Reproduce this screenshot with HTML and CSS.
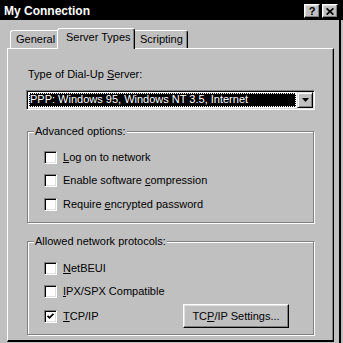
FILE: index.html
```html
<!DOCTYPE html>
<html>
<head>
<meta charset="utf-8">
<link rel="stylesheet" href="styles.css">
</head>
<body>
<div class="window">
  <div class="titlebar">
    <span class="title">My Connection</span>
    <div class="tb-buttons">
      <span class="tb-btn help">?</span>
      <span class="tb-btn close"><svg width="8" height="7" viewBox="0 0 8 7"><path d="M0.6 0.4 L7.4 6.6 M7.4 0.4 L0.6 6.6" stroke="#000" stroke-width="1.7" fill="none"/></svg></span>
    </div>
  </div>
  <div class="main">
    <div class="tabs">
      <div class="tab tab-general">General</div>
      <div class="tab tab-active">Server Types</div>
      <div class="tab tab-scripting">Scripting</div>
    </div>
    <div class="panel">
      <div class="label">Type of Dial-Up <u>S</u>erver:</div>
      <div class="combo">
        <div class="combo-field"><span class="combo-sel">PPP: Windows 95, Windows NT 3.5, Internet</span></div>
        <span class="combo-btn"><svg width="7" height="4" viewBox="0 0 7 4"><path d="M0 0H7L3.5 4Z" fill="#000"/></svg></span>
      </div>
      <fieldset class="group group-adv">
        <legend>Advanced options:</legend>
        <div class="check-row"><span class="cb"></span><span><u>L</u>og on to network</span></div>
        <div class="check-row r2"><span class="cb"></span><span>Enable software <u>c</u>ompression</span></div>
        <div class="check-row r3"><span class="cb"></span><span>Require <u>e</u>ncrypted password</span></div>
      </fieldset>
      <fieldset class="group group-proto">
        <legend>Allowed network protocols:</legend>
        <div class="check-row"><span class="cb"></span><span><u>N</u>etBEUI</span></div>
        <div class="check-row r2"><span class="cb"></span><span><u>I</u>PX/SPX Compatible</span></div>
        <div class="check-row r3b"><span class="cb checked"><svg width="7" height="7" viewBox="0 0 7 7"><path d="M0.5 2.8 L2.5 4.8 L6.5 0.8" stroke="#000" stroke-width="1.8" fill="none"/></svg></span><span><u>T</u>CP/IP</span><span class="btn">TC<u>P</u>/IP Settings...</span></div>
      </fieldset>
    </div>
  </div>
</div>
</body>
</html>
```
FILE: styles.css
```css
* { box-sizing: border-box; }
html, body { margin: 0; padding: 0; }
body {
  width: 343px;
  height: 343px;
  overflow: hidden;
  background: #c0c0c0;
  font-family: "Liberation Sans", Arial, sans-serif;
  font-size: 11px;
  line-height: 13px;
  color: #000;
}
u { text-decoration: underline; text-underline-offset: 1px; }
.window { display: flex; flex-direction: column; height: 343px; }
.titlebar {
  height: 20px;
  flex: none;
  background: #000;
  display: flex;
  align-items: flex-start;
  justify-content: space-between;
}
.title {
  color: #fff;
  font-weight: bold;
  font-size: 12px;
  line-height: 14px;
  margin: 4px 0 0 4px;
}
.tb-buttons { display: flex; gap: 2px; margin: 4px 5px 0 0; }
.tb-btn {
  width: 16px;
  height: 14px;
  background: #c0c0c0;
  border: 1px solid;
  border-color: #fff #000 #000 #fff;
  box-shadow: inset -1px -1px #808080, inset 1px 1px #dfdfdf;
  display: flex;
  align-items: center;
  justify-content: center;
  font-weight: bold;
  font-size: 11px;
  line-height: 11px;
}
.main {
  flex: 1;
  display: flex;
  flex-direction: column;
  margin-right: 2px;
  border-right: 2px solid #000;
}
.tabs {
  height: 28px;
  flex: none;
  display: flex;
  align-items: flex-end;
  padding-left: 10px;
}
.tab {
  height: 18px;
  padding-top: 2px;
  border-top: 1px solid #fff;
  border-left: 1px solid #fff;
  border-right: 1px solid #000;
  border-radius: 3px 3px 0 0;
  box-shadow: inset -1px 0 #808080;
  line-height: 13px;
  white-space: nowrap;
  background: #c0c0c0;
}
.tab-general { width: 47px; padding-left: 5px; border-right: none; box-shadow: none; border-top-right-radius: 0; }
.tab-active {
  width: 78px;
  height: 21px;
  padding-left: 8px;
  margin-bottom: -1px;
  position: relative;
  z-index: 1;
}
.tab-scripting { width: 53px; padding-left: 5px; border-left: none; border-top-left-radius: 0; }
.panel {
  flex: 1;
  margin: 0 5px 1px 7px;
  border-left: 1px solid #fff;
  border-top: 1px solid #fff;
  border-right: 1px solid #000;
  border-bottom: 2px solid #000;
  box-shadow: inset -1px 0 #808080;
  padding: 19px 0 0 19px;
}
.label { margin-left: 1px; }
.combo {
  margin: 9px 0 0 -1px;
  width: 289px;
  height: 20px;
  display: flex;
  border: 1px solid;
  border-color: #808080 #fff #fff #808080;
  box-shadow: inset 1px 1px #000, inset -1px -1px #dfdfdf;
  background: #fff;
  padding: 1px;
}
.combo-field { flex: 1; padding: 1px; min-width: 0; }
.combo-sel {
  display: block;
  height: 14px;
  background: #000;
  color: #fff;
  border: 1px dotted #fff;
  line-height: 11px;
  white-space: nowrap;
  overflow: hidden;
}
.combo-btn {
  width: 16px;
  height: 16px;
  flex: none;
  background: #c0c0c0;
  border: 1px solid;
  border-color: #dfdfdf #000 #000 #dfdfdf;
  box-shadow: inset 1px 1px #fff, inset -1px -1px #808080;
  display: flex;
  align-items: center;
  justify-content: center;
}
.group {
  margin: 15px 0 0 0;
  width: 287px;
  min-width: 0;
  padding: 13px 0 11px 0;
  border: 1px solid #808080;
  box-shadow: inset 1px 1px #fff, 1px 1px #fff;
}
.group legend {
  margin-left: 6px;
  padding: 0 1px;
  background: #c0c0c0;
  line-height: 13px;
}
.group-proto { margin-top: 12px; padding: 14px 0 6px 0; }
.check-row {
  display: flex;
  align-items: center;
  gap: 6px;
  height: 13px;
  margin-left: 16px;
  white-space: nowrap;
}
.check-row.r2 { margin-top: 10px; }
.check-row.r3 { margin-top: 11px; }
.check-row.r3b { margin-top: 6px; height: 24px; }
.cb {
  width: 13px;
  height: 13px;
  flex: none;
  background: #fff;
  border: 1px solid;
  border-color: #808080 #fff #fff #808080;
  box-shadow: inset 1px 1px #000, inset -1px -1px #dfdfdf;
  display: flex;
  align-items: center;
  justify-content: center;
}
.btn {
  margin-left: auto;
  margin-right: 24px;
  width: 106px;
  height: 24px;
  border: 1px solid;
  border-color: #fff #000 #000 #fff;
  box-shadow: inset -1px -1px #808080, inset 1px 1px #dfdfdf;
  background: #c0c0c0;
  display: flex;
  align-items: center;
  justify-content: center;
}
```
